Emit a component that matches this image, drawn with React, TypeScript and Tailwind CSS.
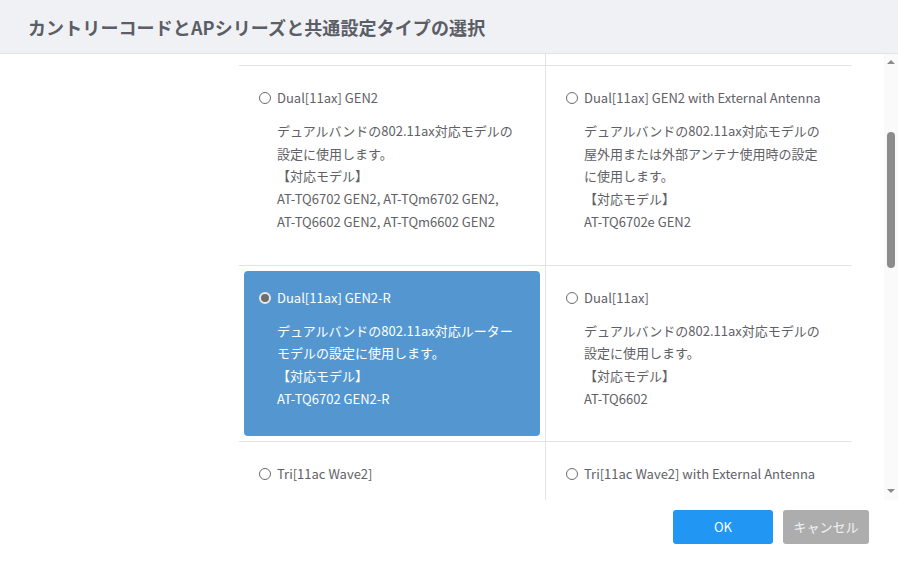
import React from "react";

type Item = {
  label: string;
  lines: string[];
  selected?: boolean;
};

const rows: Item[][] = [
  [
    {
      label: "Dual[11ax] GEN2",
      lines: [
        "デュアルバンドの802.11ax対応モデルの",
        "設定に使用します。",
        "【対応モデル】",
        "AT-TQ6702 GEN2, AT-TQm6702 GEN2,",
        "AT-TQ6602 GEN2, AT-TQm6602 GEN2",
      ],
    },
    {
      label: "Dual[11ax] GEN2 with External Antenna",
      lines: [
        "デュアルバンドの802.11ax対応モデルの",
        "屋外用または外部アンテナ使用時の設定",
        "に使用します。",
        "【対応モデル】",
        "AT-TQ6702e GEN2",
      ],
    },
  ],
  [
    {
      label: "Dual[11ax] GEN2-R",
      selected: true,
      lines: [
        "デュアルバンドの802.11ax対応ルーター",
        "モデルの設定に使用します。",
        "【対応モデル】",
        "AT-TQ6702 GEN2-R",
      ],
    },
    {
      label: "Dual[11ax]",
      lines: [
        "デュアルバンドの802.11ax対応モデルの",
        "設定に使用します。",
        "【対応モデル】",
        "AT-TQ6602",
      ],
    },
  ],
  [
    { label: "Tri[11ac Wave2]", lines: [] },
    { label: "Tri[11ac Wave2] with External Antenna", lines: [] },
  ],
];

function Radio({ checked }: { checked?: boolean }) {
  return checked ? (
    <span className="box-border inline-block h-[12px] w-[12px] shrink-0 rounded-full border-[2px] border-[#e8e8e8] bg-[#6e6e6e]" />
  ) : (
    <span className="box-border inline-block h-[12px] w-[12px] shrink-0 rounded-full border border-[#6b6b6b] bg-white" />
  );
}

function Cell({ item, right }: { item: Item; right?: boolean }) {
  return (
    <div
      className={
        right
          ? "w-[306px] p-[5px]"
          : "w-[307px] border-r border-[#e4e4e4] p-[5px]"
      }
    >
      <div
        className={
          item.selected
            ? "min-h-[120px] rounded-[4px] bg-[#5497d0] px-[15px] pb-[26px] pt-[17px] text-white"
            : "min-h-[120px] rounded-[4px] px-[15px] pb-[26px] pt-[17px] text-[#5f6166]"
        }
      >
        <div className="flex h-[20px] items-center gap-[6px] whitespace-nowrap text-[13px] leading-[20px]">
          <Radio checked={item.selected} />
          <span>{item.label}</span>
        </div>
        {item.lines.length > 0 && (
          <div className="mt-[12px] pl-[18px] text-[13px] leading-[22.7px] whitespace-nowrap">
            {item.lines.map((l, i) => (
              <div key={i}>{l}</div>
            ))}
          </div>
        )}
      </div>
    </div>
  );
}

export default function App() {
  return (
    <div
      className="flex h-[568px] w-[898px] flex-col overflow-hidden bg-white"
      style={{ fontFamily: '"Noto Sans CJK JP", "Noto Sans", sans-serif' }}
    >
      <div className="flex h-[54px] shrink-0 items-center border-b border-[#e3e4e8] bg-[#f0f1f5] pl-[28px]">
        <h1 className="text-[18px] font-bold leading-none tracking-[0.1px] text-[#5b5e66]">
          カントリーコードとAPシリーズと共通設定タイプの選択
        </h1>
      </div>

      <div className="flex h-[446px] shrink-0">
        <div className="h-full flex-1 overflow-hidden pl-[239px]">
          <div className="flex h-[11px]">
            <div className="w-[307px] border-r border-[#e4e4e4]" />
            <div className="w-[306px]" />
          </div>
          {rows.map((r, i) => (
            <div key={i} className="flex w-[613px] border-t border-[#e4e4e4]">
              <Cell item={r[0]} />
              <Cell item={r[1]} right />
            </div>
          ))}
        </div>
        <div className="flex h-full w-[14px] flex-col items-center bg-[#fafafa]">
          <div className="mt-[6px] h-0 w-0 border-x-[4px] border-b-[4px] border-x-transparent border-b-[#8a8a8a]" />
          <div className="mt-[68px] h-[136px] w-[8px] rounded-full bg-[#8c8c8c]" />
          <div className="flex-1" />
          <div className="mb-[7px] h-0 w-0 border-x-[4px] border-t-[4px] border-x-transparent border-t-[#8a8a8a]" />
        </div>
      </div>

      <div className="flex flex-1 items-start justify-end gap-[10px] pr-[29px] pt-[10px]">
        <button className="h-[34px] w-[100px] rounded-[3px] bg-[#2196f3] text-[13px] text-white">
          OK
        </button>
        <button className="h-[34px] w-[86px] rounded-[3px] bg-[#adadad] text-[13px] text-[#f2f2f2]">
          キャンセル
        </button>
      </div>
    </div>
  );
}
